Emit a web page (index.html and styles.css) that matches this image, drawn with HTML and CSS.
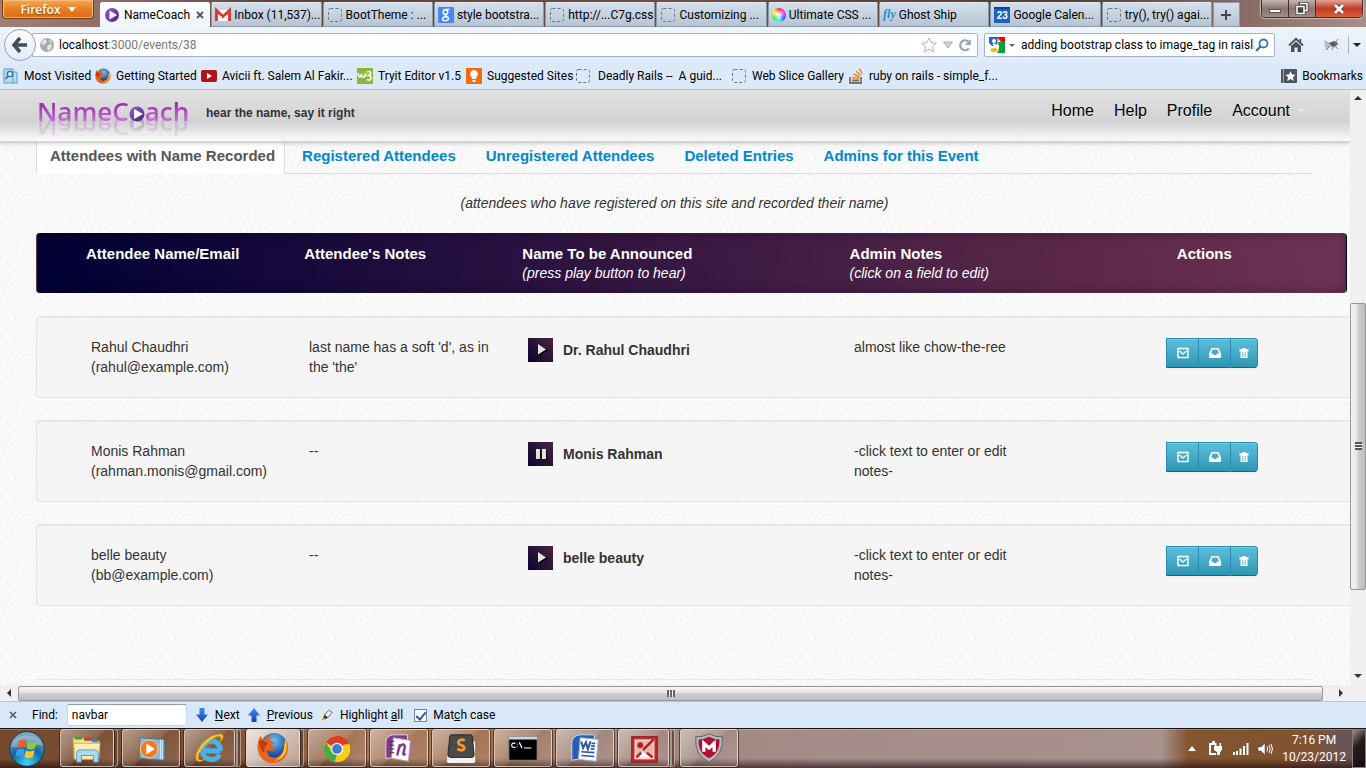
FILE: index.html
```
<!DOCTYPE html>
<html lang="en">
<head>
<meta charset="utf-8">
<title>NameCoach</title>
<link rel="stylesheet" href="styles.css">
</head>
<body>
<svg class="sprites" aria-hidden="true">
  <defs>
    <linearGradient id="gPurple" x1="0" y1="0" x2="1" y2="1"><stop offset="0" stop-color="#9a5fd0"/><stop offset="1" stop-color="#4b2078"/></linearGradient>
    <linearGradient id="gBlue" x1="0" y1="0" x2="0" y2="1"><stop offset="0" stop-color="#3f8df2"/><stop offset="1" stop-color="#1443b8"/></linearGradient>
    <radialGradient id="gOrb" cx=".5" cy=".9" r=".9"><stop offset="0" stop-color="#3fd4ff"/><stop offset=".5" stop-color="#12679f"/><stop offset="1" stop-color="#8fb3c9"/></radialGradient>
    <radialGradient id="gFox" cx=".5" cy=".3" r=".7"><stop offset="0" stop-color="#6fc4f5"/><stop offset="1" stop-color="#0c2a80"/></radialGradient>
  </defs>
  <symbol id="blank" viewBox="0 0 16 16"><rect x="1.500" y="1.500" width="13" height="13" rx="2" fill="none" stroke="#6b7480" stroke-dasharray="3 2"/></symbol>
  <symbol id="coach" viewBox="0 0 16 16"><circle cx="8" cy="8" r="7" fill="url(#gPurple)"/><path d="M5.500 3.500L13 8L5.500 12.500Z" fill="#fff"/></symbol>
  <symbol id="gmail" viewBox="0 0 16 16"><path d="M0 3h16v11H0z" fill="#fff"/><path d="M1.500 14V3.500L8 9.500L14.500 3.500V14" fill="none" stroke="#d93a32" stroke-width="3"/><path d="M3 13.500L6.500 9M13 13.500L9.500 9" stroke="#ccc" fill="none"/></symbol>
  <symbol id="goog" viewBox="0 0 16 16"><rect width="16" height="16" rx="1" fill="#4a86f0"/><path d="M11.500 2.500H7.500C4.500 2.500 4.500 7.500 7.500 7.500S10.500 3 7.500 3M7.500 7.500C6 9 10.500 9 10.500 11.500S4.500 14.500 4.500 12S8 9.800 9 9.500" fill="none" stroke="#fff" stroke-width="1.500"/></symbol>
  <symbol id="world" viewBox="0 0 16 16"><circle cx="8" cy="8" r="7" fill="#a9a9a9"/><path d="M3 4L7 2L8 5L5 8L2 7ZM9 8L13 7L12 12L9 14L8 11ZM10 2L13 5L11 6Z" fill="#e3e3e3"/></symbol>
  <symbol id="fox" viewBox="0 0 34 34"><circle cx="18" cy="15" r="14" fill="url(#gFox)"/><path d="M2 8C1 10 0 15 1 20C3 30 12 34 18 33C27 32 33 26 33 16C33 13 32 10 30 8C30 11 30 13 29 14C30 20 25 27 18 27C13 27 10 23 11 19C14 21 17 20 20 18C18 17 15 17 15 14L19 12C18 10 14 10 12 8C13 6 15 5 15 4C12 4 9 6 8 8C6 8 4 6 4 4C3 5 2 7 2 8Z" fill="#e8641b"/><path d="M30 8C34 16 31 29 18 31C27 26 29 20 29 14Z" fill="#fdc52f"/><path d="M2 10C4 8 6 9 8 10L12 12C9 14 7 17 8 22C5 20 3 17 2 10Z" fill="#c2380f"/></symbol>
  <symbol id="envelope" viewBox="0 0 12 12"><path d="M1 1.500h10v9H1z" fill="none" stroke="#fff" stroke-width="1.400"/><path d="M2.500 4L6 7L9.500 4" fill="none" stroke="#fff" stroke-width="1.400"/></symbol>
  <symbol id="inbox" viewBox="0 0 12 12"><path d="M2.500 1H9.500L12 6.500V11H0V6.500ZM3.500 2.500L2 6.500H4L4.800 8H7.200L8 6.500H10L8.500 2.500Z" fill="#fff" fill-rule="evenodd"/></symbol>
  <symbol id="trash" viewBox="0 0 12 12"><path d="M4.500 1h3v1h3v2.500H1.500V2h3ZM2.500 4.500H9.500V11H2.500Z" fill="#fff"/><path d="M4.500 5v5M6 5v5M7.500 5v5" stroke="#5fb4cd" stroke-width=".6"/></symbol>
</svg>

<div class="window">
  <header class="titlebar">
    <button class="fx-menu" type="button">Firefox <span class="tri-w"></span></button>
    <nav class="tabs" aria-label="Open tabs">
      <button class="tab active" type="button"><svg><use href="#coach"/></svg><span>NameCoach</span><svg class="x" viewBox="0 0 8 8"><path d="M1 1L7 7M7 1L1 7" stroke="#555" stroke-width="1.800"/></svg></button>
      <button class="tab" type="button"><svg><use href="#gmail"/></svg><span>Inbox (11,537)...</span></button>
      <button class="tab" type="button"><svg><use href="#blank"/></svg><span>BootTheme : ...</span></button>
      <button class="tab" type="button"><svg><use href="#goog"/></svg><span>style bootstra...</span></button>
      <button class="tab" type="button"><svg><use href="#blank"/></svg><span>http://...C7g.css</span></button>
      <button class="tab" type="button"><svg><use href="#blank"/></svg><span>Customizing ...</span></button>
      <button class="tab" type="button"><i class="wheel"></i><span>Ultimate CSS ...</span></button>
      <button class="tab" type="button"><em class="fly">fly</em><span>Ghost Ship</span></button>
      <button class="tab" type="button"><b class="cal">23</b><span>Google Calen...</span></button>
      <button class="tab" type="button"><svg><use href="#blank"/></svg><span>try(), try() agai...</span></button>
      <button class="newtab" type="button" aria-label="New tab"><svg viewBox="0 0 12 12"><path d="M6 1v10M1 6h10" stroke="#445" stroke-width="2"/></svg></button>
    </nav>
    <div class="winctl">
      <button type="button" aria-label="Minimize"><svg viewBox="0 0 16 14"><rect x="2.500" y="7.500" width="11" height="3" fill="#fff" stroke="#555"/></svg></button>
      <button type="button" aria-label="Restore"><svg viewBox="0 0 16 14"><path d="M6 1.500h7v7h-7zM3 4.500h7v7H3z" fill="#877" stroke="#444" stroke-width="3"/><path d="M6 1.500h7v7h-3M3 4.500h7v7H3z" fill="none" stroke="#fff" stroke-width="1.500"/></svg></button>
      <button class="close" type="button" aria-label="Close"><svg viewBox="0 0 16 14"><path d="M4 3L12 11M12 3L4 11" stroke="#633" stroke-width="4.500"/><path d="M4 3L12 11M12 3L4 11" stroke="#fff" stroke-width="2.800"/></svg></button>
    </div>
  </header>

  <div class="navbar">
    <button class="back" type="button" aria-label="Back"><svg viewBox="0 0 18 18"><path d="M9 2L3 9L9 16M3 9H16" fill="none" stroke="#42505c" stroke-width="3.600"/></svg></button>
    <div class="address">
      <svg class="i16"><use href="#world"/></svg>
      <div class="url">localhost<span>:3000/events/38</span></div>
      <svg class="i16" viewBox="0 0 16 16"><path d="M8 1L10.200 5.700L15.300 6.200L11.500 9.700L12.600 14.800L8 12.200L3.400 14.800L4.500 9.700L.7 6.200L5.800 5.700Z" fill="#fff" stroke="#a9b2bc"/></svg>
      <svg class="i9" viewBox="0 0 10 8"><path d="M.5 1h9L5 7Z" fill="#cdd5e2" stroke="#a3adbd"/></svg>
      <svg class="i14" viewBox="0 0 14 14"><path d="M11 10.500A5 5 0 1 1 10.500 3.500" fill="none" stroke="#98a3b0" stroke-width="2.200"/><path d="M12.800 1v6H7Z" fill="#98a3b0"/></svg>
    </div>
    <div class="search">
      <svg class="i16" viewBox="0 0 16 16"><path d="M8 0h8v5h-4Z" fill="#f00"/><path d="M9 5h7v11H8l2-5Z" fill="#0f9f3a"/><path d="M0 0h9l-1 9H3L0 6Z" fill="#2a62d8"/><circle cx="5" cy="4" r="2" fill="#fff"/><ellipse cx="5" cy="13" rx="4" ry="2.500" fill="#f3b020" stroke="#fff"/><path d="M4 7l6 3" stroke="#fff" stroke-width="2"/></svg>
      <span class="tri-d"></span>
      <input type="text" aria-label="Search" value="adding bootstrap class to image_tag in raisl">
      <svg class="i14" viewBox="0 0 14 14"><circle cx="8.500" cy="5.500" r="4" fill="none" stroke="#3a74b8" stroke-width="1.800"/><path d="M5.500 8.500L1.200 12.800" stroke="#3a74b8" stroke-width="2.400"/></svg>
    </div>
    <svg class="home" viewBox="0 0 16 16"><path d="M1 8.500L8 1.800L15 8.500" fill="none" stroke="#46525e" stroke-width="1.800"/><path d="M3 9L8 4.500L13 9V15H9.500V10.500H6.500V15H3ZM11.500 2H13.200V6L11.500 4.500Z" fill="#46525e"/></svg>
    <svg class="bug" viewBox="0 0 18 14"><path d="M1 6L8 4L10 8L3 11ZM9 3L16 5L12 10L8 8Z" fill="#b9bfc6"/><path d="M6 5L12 3L15 6L10 9Z" fill="#555"/><path d="M3 12L7 8M9 12L10 8M15 11L12 8M15 1L12 5M1 3L6 6" fill="none" stroke="#888"/><circle cx="12.500" cy="5" r="1" fill="#a66"/></svg>
    <span class="sep"></span>
    <span class="tri-k"></span>
  </div>

  <nav class="bookmarks" aria-label="Bookmarks">
    <a href="#" class="b1"><svg viewBox="0 0 16 16"><path d="M1 1h9v14H1zM10 4h4v11h-4" fill="#b9dcf0" stroke="#5b9cc4"/><circle cx="7" cy="6" r="2.600" fill="#dff1fb" stroke="#30709c" stroke-width="1.400"/><path d="M5 8L2.500 11" stroke="#30709c" stroke-width="1.600"/></svg>Most Visited</a>
    <a href="#" class="b2"><svg><use href="#fox"/></svg>Getting Started</a>
    <a href="#" class="b3"><svg viewBox="0 0 16 16"><rect y="2" width="16" height="12" rx="2" fill="#b31217"/><path d="M6 5L11 8L6 11Z" fill="#fff"/></svg>Avicii ft. Salem Al Fakir...</a>
    <a href="#" class="b4"><svg viewBox="0 0 16 16"><rect width="16" height="16" fill="#8cb63c"/><path d="M1 5C2 11 4 9 4.500 6C5 11 8 10 8.500 5M10 4C14 2 15 6 11.500 7.500C16 8 14 14 10 11.500" fill="none" stroke="#fff" stroke-width="1.600"/></svg>Tryit Editor v1.5</a>
    <a href="#" class="b5"><svg viewBox="0 0 16 16"><rect width="16" height="16" fill="#f36a10"/><path d="M8 2a4 4 0 0 1 2.500 7L10 11H6L5.500 9A4 4 0 0 1 8 2M6.500 12h3v2h-3z" fill="#fff"/></svg>Suggested Sites</a>
    <a href="#" class="b6"><svg><use href="#blank"/></svg>Deadly Rails --&nbsp; A guid...</a>
    <a href="#" class="b7"><svg><use href="#blank"/></svg>Web Slice Gallery</a>
    <a href="#" class="b8"><svg viewBox="0 0 16 16"><path d="M2 9v6h11V9M4 12.500h7" fill="none" stroke="#77736f" stroke-width="1.800"/><path d="M4 9.500L11 10.500M5.500 6L11.500 9M8 3L12.500 7.500M11.500 .5L14 6" stroke="#ec8a25" stroke-width="1.600"/></svg>ruby on rails - simple_f...</a>
    <a href="#" class="b9"><svg viewBox="0 0 16 16"><rect y="1" width="16" height="14" rx="1" fill="#4a5560"/><path d="M2.500 1v14" stroke="#9aa"/><path d="M9.500 3L11 6.500L14.500 6.800L12 9.200L12.800 13L9.500 11L6.200 13L7 9.200L4.500 6.800L8 6.500Z" fill="#fff"/></svg>Bookmarks</a>
  </nav>

  <div class="viewport">
    <main class="page">
      <header class="site">
        <a class="logo" href="#" aria-label="NameCoach">NameC<svg viewBox="0 0 16 16"><circle cx="8" cy="8" r="7.500" fill="url(#gPurple)"/><path d="M5 3L14 8L5 13Z" fill="#fff"/></svg>ach</a>
        <strong class="tagline">hear the name, say it right</strong>
        <nav class="menu" aria-label="Site">
          <a href="#">Home</a><a href="#">Help</a><a href="#">Profile</a><a href="#">Account<span class="caret"></span></a>
        </nav>
      </header>

      <section class="content">
        <nav class="pills" aria-label="Attendee lists">
          <a class="on" href="#">Attendees with Name Recorded</a>
          <a href="#">Registered Attendees</a>
          <a href="#">Unregistered Attendees</a>
          <a href="#">Deleted Entries</a>
          <a href="#">Admins for this Event</a>
        </nav>
        <p class="hint">(attendees who have registered on this site and recorded their name)</p>
        <table class="people">
          <thead>
            <tr>
              <th>Attendee Name/Email</th>
              <th>Attendee's Notes</th>
              <th>Name To be Announced<em>(press play button to hear)</em></th>
              <th>Admin Notes<em>(click on a field to edit)</em></th>
              <th>Actions</th>
            </tr>
          </thead>
          <tbody>
            <tr>
              <td>Rahul Chaudhri<br>(rahul@example.com)</td>
              <td class="note">last name has a soft 'd', as in the 'the'</td>
              <td class="name"><button class="play" type="button" aria-label="Play"><svg viewBox="0 0 25 24"><path d="M11 7L20 12.500L11 18Z" fill="#000"/><path d="M10 6L18 11.500L10 16.500Z" fill="#e4e0e4"/></svg></button><strong>Dr. Rahul Chaudhri</strong></td>
              <td class="note admin">almost like chow-the-ree</td>
              <td class="btns"><button type="button" aria-label="Email"><svg><use href="#envelope"/></svg></button><button type="button" aria-label="Archive"><svg><use href="#inbox"/></svg></button><button type="button" aria-label="Delete"><svg><use href="#trash"/></svg></button></td>
            </tr>
            <tr>
              <td>Monis Rahman<br>(rahman.monis@gmail.com)</td>
              <td class="note">--</td>
              <td class="name"><button class="play" type="button" aria-label="Pause"><svg viewBox="0 0 25 24"><path d="M9 8h4v10H9zM15 8h4v10h-4z" fill="#000"/><path d="M8 7h4v10H8zM14 7h4v10h-4z" fill="#e4e0e4"/></svg></button><strong>Monis Rahman</strong></td>
              <td class="note admin">-click text to enter or edit notes-</td>
              <td class="btns"><button type="button" aria-label="Email"><svg><use href="#envelope"/></svg></button><button type="button" aria-label="Archive"><svg><use href="#inbox"/></svg></button><button type="button" aria-label="Delete"><svg><use href="#trash"/></svg></button></td>
            </tr>
            <tr>
              <td>belle beauty<br>(bb@example.com)</td>
              <td class="note">--</td>
              <td class="name"><button class="play" type="button" aria-label="Play"><svg viewBox="0 0 25 24"><path d="M11 7L20 12.500L11 18Z" fill="#000"/><path d="M10 6L18 11.500L10 16.500Z" fill="#e4e0e4"/></svg></button><strong>belle beauty</strong></td>
              <td class="note admin">-click text to enter or edit notes-</td>
              <td class="btns"><button type="button" aria-label="Email"><svg><use href="#envelope"/></svg></button><button type="button" aria-label="Archive"><svg><use href="#inbox"/></svg></button><button type="button" aria-label="Delete"><svg><use href="#trash"/></svg></button></td>
            </tr>
          </tbody>
        </table>
      </section>
      <div class="rule"></div>
    </main>
    <div class="vscroll"><span class="arr up"></span><div class="vtrack"><div class="vthumb"><span class="grip"></span></div></div><span class="arr down"></span></div>
    <div class="hscroll"><span class="arr left"></span><div class="hthumb"><span class="grip side"></span></div><span class="arr right"></span></div>
    <div class="corner"></div>
  </div>

  <form class="find">
    <button class="fclose" type="button" aria-label="Close find bar"><svg viewBox="0 0 8 8"><path d="M1 1L7 7M7 1L1 7" stroke="#555" stroke-width="1.500"/></svg></button>
    <label for="q">Find:</label>
    <input id="q" type="text" value="navbar">
    <button type="button"><svg viewBox="0 0 12 14"><path d="M3.500 0h5v6.500H12L6 14L0 6.500h3.500Z" fill="url(#gBlue)"/></svg><span><u>N</u>ext</span></button>
    <button type="button"><svg viewBox="0 0 12 14"><path d="M3.500 14h5V7.500H12L6 0L0 7.500h3.500Z" fill="url(#gBlue)"/></svg><span><u>P</u>revious</span></button>
    <button type="button"><svg viewBox="0 0 14 14"><path d="M4 7L9 1.500L13 4L8 10Z" fill="#f3f3f3" stroke="#555"/><path d="M4 7L8 10L5 12L2.500 10Z" fill="#333"/><path d="M0 14L2.500 10L5 12Z" fill="#f5a300"/></svg><span>Highlight <u>a</u>ll</span></button>
    <label class="check"><input type="checkbox" checked><span>Mat<u>c</u>h case</span></label>
  </form>

  <footer class="taskbar">
    <button class="orb" type="button" aria-label="Start"><svg viewBox="0 0 36 36"><circle cx="18" cy="18" r="17.300" fill="url(#gOrb)" stroke="#123a57"/><path d="M2 15C6 1 30 1 34 15C26 11 10 20 2 15Z" fill="#fff" opacity=".28"/><path d="M10 10C13 8 15 9 17.500 10L16 17C13 15.500 11 15.500 8.500 17Z" fill="#ef5a26"/><path d="M19 10.500C22 12 25 12 28 10.500L26 17.500C23 19 20 19 17.500 17.500Z" fill="#8fc63f"/><path d="M8 18.500C10.500 17 13 17 15.500 18.500L14 25.500C11.500 24 9 24 6.500 25.500Z" fill="#3c9fe8"/><path d="M17 19.500C20 21 23 20.500 25.500 19L24 26C21 27.500 18 27.500 15.500 26Z" fill="#fdc82f"/></svg></button>
    <nav class="apps" aria-label="Taskbar">
      <button class="stack" type="button" aria-label="Explorer"><svg viewBox="0 0 34 34"><path d="M2 6h11l2 3h15v19H3Z" fill="#f4e08a" stroke="#b59b3d"/><path d="M4 5h8v3H4z" fill="#3a3"/><path d="M14 6h7v3h-7z" fill="#d33"/><path d="M22 8h7v3h-7z" fill="#38d"/><path d="M3 12h28l-2 17H4Z" fill="#fbeeb0" stroke="#cdb45a"/><path d="M6 32V22Q6 19 10 19H25Q29 19 29 22V32H24V25H11V32Z" fill="#a9d9ef" stroke="#5b9bbd"/></svg></button>
      <button type="button" aria-label="Media Player"><svg viewBox="0 0 34 34"><path d="M5 6L31 8V30L5 28Z" fill="#7fb9dd" stroke="#41799f"/><path d="M27 8v21M29 8v21" stroke="#d9f0ff"/><circle cx="15" cy="18" r="9.500" fill="#f07a1c" stroke="#ffd1a0"/><path d="M12 12L21 18L12 24Z" fill="#fff"/></svg></button>
      <button class="stack two" type="button" aria-label="Internet Explorer"><svg viewBox="0 0 34 34"><path d="M28 20H10M28 20C28 6 9 6 9 19C9 31 24 32 27 24" fill="none" stroke="#46b4ea" stroke-width="5.500"/><path d="M4 31C-3 27 10 6 23 3C34 0 32 7 27 11C32 2 24 4 20 7C10 13 2 26 5 29C7 31 11 29 13 28C9 31 6 32 4 31Z" fill="#fbc92c" stroke="#c98f12" stroke-width=".5"/></svg></button>
      <button class="stack current" type="button" aria-label="Firefox"><svg><use href="#fox"/></svg></button>
      <button type="button" aria-label="Chrome"><svg viewBox="0 0 34 34"><circle cx="17" cy="18" r="14" fill="#fbd116"/><path d="M17 18L5 11A14 14 0 0 1 29 11Z" fill="#dd3b2e"/><path d="M17 4A14 14 0 0 1 30 13H17Z" fill="#dd3b2e"/><path d="M5 11L12 22L17 24L14.500 32A14 14 0 0 1 5 11Z" fill="#4aa84b"/><circle cx="17" cy="18" r="6.500" fill="#fff"/><circle cx="17" cy="18" r="5.200" fill="#3f7fc8"/></svg></button>
      <button type="button" aria-label="OneNote"><svg viewBox="0 0 34 34"><path d="M3 11Q3 4 11 3H26V26L3 28Z" fill="#7a3f86" stroke="#e7d6ea"/><path d="M11 6L29 9L27 31L9 28Z" fill="#fff" stroke="#b79cc0"/><path d="M29 12h3v4h-3zM29 18h3v4h-3z" fill="#a876b5"/><path d="M15 25L18 13M16.500 18C19 12 24 12 23 17L21.500 23Q22 25 24 23" fill="none" stroke="#803a8e" stroke-width="2.600"/><path d="M7 10h5M7 14h5M7 18h5M7 22h5" stroke="#333"/></svg></button>
      <button type="button" aria-label="Sublime Text"><svg viewBox="0 0 34 34"><path d="M4 10L32 10V31Q32 33 30 33H4Q2 33 2 31Z" fill="#f2f2f2"/><path d="M7 3H27Q29 3 29 5L31 24Q31 27 28 27H6Q3 27 3 24L5 5Q5 3 7 3Z" fill="#4a4a4a" stroke="#222"/><path d="M21 9C14 6 12 13 17 14C23 15 21 22 13 18" fill="none" stroke="#f59535" stroke-width="3"/></svg></button>
      <button type="button" aria-label="Command Prompt"><svg viewBox="0 0 34 34"><rect x="2" y="5" width="30" height="25" fill="#000" stroke="#888"/><rect x="2" y="5" width="30" height="3" fill="#c5d5e5"/><path d="M9 12Q5 11 5 14Q5 17 9 16M11 12.500v.8M11 15.500v.8M13 11L16 17M18 17H26" fill="none" stroke="#fff" stroke-width="1.300"/></svg></button>
      <button type="button" aria-label="Word"><svg viewBox="0 0 34 34"><path d="M3 12Q3 4 12 3H27V26L3 30Z" fill="#2a5db0" stroke="#cfe0f5"/><path d="M12 6L31 8L29 31L10 29Z" fill="#fff" stroke="#9ab4d8"/><path d="M13 10L15 17L18 11L20 18L23 10" fill="none" stroke="#2a56a8" stroke-width="2.200"/><path d="M24 12h4M23.500 15h4M23 18h4M13 21l14 1M13 25l14 1" stroke="#2a56a8" stroke-width="1.800"/></svg></button>
      <button class="stack two" type="button" aria-label="Picture Manager"><svg viewBox="0 0 34 34"><rect x="4" y="5" width="27" height="27" fill="#c52a2a" stroke="#7e1414"/><rect x="7.500" y="8.500" width="20" height="20" fill="#e8b4ac" stroke="#fff"/><circle cx="13" cy="14" r="3" fill="#b51e1e"/><path d="M9 27L15 21L26 27Z" fill="#fff"/><path d="M16 19L27 8M9 27L14 22M20 22L26 27" fill="none" stroke="#b51e1e" stroke-width="2.600"/></svg></button>
      <button type="button" aria-label="McAfee"><svg viewBox="0 0 34 34"><path d="M17 2Q25 6 31 5Q33 24 17 32Q1 24 3 5Q9 6 17 2Z" fill="#b5b9bd" stroke="#5c5f62"/><path d="M17 5Q23 8 28 8Q29 22 17 28Q5 22 6 8Q11 8 17 5Z" fill="#b01030"/><path d="M11.500 21V12L17 17L22.500 12V21" fill="none" stroke="#fff" stroke-width="3.500"/></svg></button>
    </nav>
    <div class="tray">
      <svg viewBox="0 0 10 6" class="t1"><path d="M0 6L5 0L10 6Z" fill="#fff"/></svg>
      <svg viewBox="0 0 16 16" class="t2"><path d="M7 3H2v10h6M4 1h3" fill="none" stroke="#fff" stroke-width="2"/><path d="M6 5h8v4l-2 2v3H9v-3L6 9ZM7 2h1.500v3H7zM11.500 2H13v3h-1.500z" fill="#fff"/></svg>
      <svg viewBox="0 0 16 12" class="t3"><path d="M0 9h2v3H0zM3 8h2v4H3zM6.500 5.500h2V12h-2zM10 3h2v9h-2zM13.500 0h2v12h-2z" fill="#fff"/></svg>
      <svg viewBox="0 0 16 14" class="t4"><path d="M1 5h3L8 1v12L4 9H1Z" fill="#fff" stroke="#444" stroke-width=".5"/><path d="M10 4.500Q11.500 7 10 9.500M12 3Q14.500 7 12 11M14 2Q17 7 14 12" fill="none" stroke="#fff"/></svg>
      <div class="clock">7:16 PM<br>10/23/2012</div>
      <button class="peek" type="button" aria-label="Show desktop"></button>
    </div>
  </footer>
</div>
</body>
</html>
```
FILE: styles.css
```
* { box-sizing: border-box; }
body { margin: 0; font-family: Roboto, "Open Sans", sans-serif; font-size: 12px; color: #000; }
button { font: inherit; color: inherit; padding: 0; border: 0; background: none; }
input { font: inherit; }
a { text-decoration: none; color: inherit; }
svg { display: block; flex: none; overflow: visible; }
.sprites { position: absolute; width: 0; height: 0; }
.window { display: flex; flex-direction: column; height: 100vh; overflow: hidden; background: #dbe9f8; }

.titlebar { display: flex; height: 27px; flex: none; padding-left: 2px; background: linear-gradient(90deg, #a08078, #8d6f66 8%, #5d423c 20%, #6f4f47 50%, #543c38 78%, #8d6f69 92%, #a88f8b); }
.fx-menu { width: 92px; height: 19px; margin-right: 6px; border: 1px solid #7c3a0c; border-top: 0; border-radius: 0 0 4px 4px; background: linear-gradient(#f6a951, #e6781c 60%, #dd6b12); color: #fff; font-family: "Open Sans", sans-serif; font-weight: 600; display: flex; align-items: center; justify-content: center; gap: 7px; box-shadow: inset 0 0 0 1px #f9bd7a; text-shadow: 0 1px 1px #8a4a10; }
.tri-w { border: 4px solid transparent; border-top: 5px solid #fff; border-bottom: 0; }
.tabs { display: flex; gap: 1px; padding-top: 2px; flex: 1; margin-right: 21px; }
.tab { flex: 1 1 0; min-width: 0; height: 25px; display: flex; align-items: center; gap: 3px; padding: 0 0 0 3px; overflow: hidden; background: linear-gradient(#d3dfeb, #b7c4d3); border: 1px solid #8f9aa8; border-top-color: #e2eaf2; border-radius: 2px 2px 0 0; white-space: nowrap; }
.tab svg { width: 16px; height: 16px; }
.tab.active { background: linear-gradient(#fff, #edf4fc); border-color: #f4f8fd; gap: 4px; }
.tab .x { width: 8px; height: 8px; margin-left: 2px; }
.wheel { width: 14px; height: 14px; border-radius: 50%; flex: none; background: radial-gradient(#fff, transparent 60%), conic-gradient(#f33, #f3f, #44f, #3ff, #3e3, #ff3, #f33); }
.fly { font: italic bold 12px "Liberation Serif", serif; color: #1d8fcb; }
.cal { width: 16px; height: 16px; background: #1b62c8; color: #fff; font: bold 10px/14px "Liberation Sans", sans-serif; text-align: center; border-top: 2px solid #0d479d; }
.newtab { width: 27px; height: 25px; background: linear-gradient(#d3dfeb, #b7c4d3); border: 1px solid #8f9aa8; display: grid; place-items: center; }
.newtab svg { width: 12px; height: 12px; }
.winctl { display: flex; margin-right: 3px; height: 18px; border: 1px solid #403030; border-top: 0; border-radius: 0 0 5px 5px; overflow: hidden; box-shadow: 0 0 1px 1px #c9b8b4; }
.winctl button { width: 27px; display: grid; place-items: center; border-right: 1px solid #403030; background: linear-gradient(#c6b5b1, #8a7570 50%, #a08d88); }
.winctl .close { width: 46px; border: 0; background: linear-gradient(#e0a595, #c23a20 50%, #d8603e); }
.winctl svg { width: 16px; height: 14px; }

.navbar { height: 36px; flex: none; display: flex; align-items: center; padding: 0 5px 0 4px; background: linear-gradient(#edf4fc, #dfebf9); }
.back { width: 32px; height: 32px; border-radius: 50%; border: 1px solid #93a3bb; background: linear-gradient(#fdfeff, #e3ecf7); display: grid; place-items: center; z-index: 1; flex: none; }
.back svg { width: 18px; height: 18px; }
.address { flex: 1; height: 24px; margin-left: -4px; padding: 0 5px 0 6px; display: flex; align-items: center; gap: 4px; background: #fff; border: 1px solid #a5b5cb; border-radius: 0 2px 2px 0; }
.url { flex: 1; }
.url span { color: #777; }
.i16 { width: 16px; height: 16px; }
.i14 { width: 14px; height: 14px; margin-left: 1px; }
.i9 { width: 10px; height: 8px; margin-left: 2px; }
.search { width: 291px; height: 24px; margin-left: 6px; padding: 0 5px 0 4px; display: flex; align-items: center; background: #fff; border: 1px solid #a5b5cb; border-radius: 2px; }
.search input { flex: 1; min-width: 0; border: 0; padding: 0; margin-left: 6px; }
.tri-d { margin-left: 4px; border: 3px solid transparent; border-top-color: #666; border-bottom: 0; }
.home { width: 16px; height: 16px; margin-left: 13px; }
.bug { width: 18px; height: 14px; margin-left: 19px; }
.sep { width: 1px; height: 18px; background: #a9b6c8; margin-left: 7px; }
.tri-k { border: 4px solid transparent; border-top-color: #222; border-bottom: 0; margin-left: 4px; }

.bookmarks { height: 27px; flex: none; display: flex; align-items: center; padding: 0 3px; background: #dbe9f8; border-bottom: 1px solid #b3c3d8; white-space: nowrap; overflow: hidden; }
.bookmarks a { display: flex; align-items: center; gap: 5px; flex: none; }
.bookmarks svg { width: 16px; height: 16px; }
.b1 { width: 92px; } .b2 { width: 106px; } .b3 { width: 156px; } .b4 { width: 109px; } .b5 { width: 109px; } .b6 { width: 156px; } .b7 { width: 117px; } .b9 { margin-left: auto; }
.bookmarks .b6 { gap: 7px; }

.viewport { flex: 1; min-height: 0; display: grid; grid-template-columns: minmax(0, 1fr) 16px; grid-template-rows: minmax(0, 1fr) 16px; }
.page { grid-area: 1 / 1; overflow: hidden; display: flex; flex-direction: column; font: 14px/20px "Liberation Sans", Arial, sans-serif; color: #333; background: #fcfcfc url("data:image/svg+xml,%3Csvg xmlns='http://www.w3.org/2000/svg' width='160' height='160'%3E%3Cfilter id='n'%3E%3CfeTurbulence type='fractalNoise' baseFrequency='.35 .5' numOctaves='2' stitchTiles='stitch'/%3E%3CfeColorMatrix values='0 0 0 0 .5 0 0 0 0 .5 0 0 0 0 .5 .36 0 0 0 -.13'/%3E%3C/filter%3E%3Crect width='160' height='160' filter='url(%23n)'/%3E%3C/svg%3E"); }
.site { height: 52px; flex: none; z-index: 1; display: flex; align-items: flex-start; padding: 0 45px 0 37px; background: linear-gradient(#e2e2e2, #d2d2d2 62%, #fafafa); border-bottom: 1px solid #d4d4d4; box-shadow: 0 1px 4px rgba(0, 0, 0, .25); }
.logo { display: flex; align-items: center; width: 157px; margin-right: 12px; padding-top: 5px; font: 600 26px/32px "Open Sans", sans-serif; color: transparent; background: linear-gradient(#9320a4 30%, #c06bd0 80%); background-clip: text; -webkit-box-reflect: below -16px linear-gradient(transparent 10%, rgba(0, 0, 0, .4)); }
.logo svg { width: 16px; height: 16px; margin: 5px 0 0; }
.tagline { font-size: 12px; padding-top: 13px; }
.menu { margin-left: auto; display: flex; gap: 20px; padding-top: 11px; font-size: 16px; color: #000; text-shadow: 0 1px 0 #eee; }
.menu a { display: flex; align-items: center; }
.caret { margin-left: 7px; border: 4px solid transparent; border-top-color: #e8e8e8; border-bottom: 0; }
.content { padding: 0 3px 0 36px; }
.pills { display: flex; margin-right: 34px; height: 32px; border-bottom: 1px solid #ddd; font-weight: bold; font-size: 15px; color: #0088cc; }
.pills a { padding: 4px 13px 0 17px; }
.pills .on { height: 32px; padding: 4px 9px 0 13px; background: #fff; border: 1px solid #ddd; border-width: 0 1px; color: #555; }
.hint { margin: 19px 34px 20px 0; text-align: center; font-style: italic; }
.people, .people thead, .people tbody { display: block; }
.people thead tr { display: grid; grid-template-columns: 218fr 218fr 327fr 327fr 169fr; min-height: 60px; padding: 10px 0 0 49px; border: 1px solid transparent; border-radius: 4px; color: #fff; font-size: 15px; background: linear-gradient(80deg, #000033, #2a1240 38%, #532547 72%, #6e3253); box-shadow: inset 0 0 8px rgba(0, 0, 0, .35); }
.people th, .people td { padding: 0; text-align: left; }
.people em { display: block; font-weight: normal; font-size: 14px; line-height: 18px; }
.people tbody { display: flex; flex-direction: column; gap: 22px; margin: 23px -20px 0 0; }
.people tbody tr { display: grid; grid-template-columns: 218fr 219fr 326fr 312fr 200fr; min-height: 82px; padding: 20px 0 0 54px; background: #f5f5f5; border: 1px solid #e3e3e3; border-radius: 4px; box-shadow: inset 0 1px 1px rgba(0, 0, 0, .05); }
.people .note { padding-right: 30px; }
.people .admin { padding-right: 130px; }
.people .name, .people .btns { display: flex; align-items: flex-start; padding-top: 1px; }
.play { width: 25px; height: 24px; margin-right: 10px; background: linear-gradient(50deg, #08052c, #4a2340); }
.play svg { width: 25px; height: 24px; }
.name strong { padding-top: 2px; }
.btns button { width: 32px; height: 30px; display: grid; place-items: center; background: linear-gradient(#5bc0de, #2f96b4); border: 1px solid #2b8cab; border-right: 0; border-bottom-color: #1f6377; box-shadow: inset 0 1px 0 rgba(255, 255, 255, .2), 0 1px 2px rgba(0, 0, 0, .05); }
.btns button:last-child { width: 28px; border-right: 1px solid #2b8cab; border-radius: 0 4px 4px 0; }
.btns svg { width: 12px; height: 12px; }
.rule { margin: auto 36px 5px; height: 1px; background: #e8e8e8; }

.vscroll { grid-area: 1 / 2; display: flex; flex-direction: column; align-items: center; background: #f0f0f0; padding: 6px 0 7px; }
.vtrack { flex: 1; width: 16px; display: grid; grid-template-rows: 202fr 286fr 84fr; }
.vthumb { grid-row: 2; display: grid; place-items: center; border: 1px solid #979797; border-radius: 2px; background: linear-gradient(90deg, #f5f5f5, #e3e3e3 45%, #cfcfd1 50%, #bdbdbf); }
.hscroll { grid-area: 2 / 1; display: flex; align-items: center; background: #f0f0f0; padding: 0 7px; }
.hthumb { flex: 1; height: 15px; margin: 0 16px 0 7px; display: grid; place-items: center; border: 1px solid #979797; border-radius: 2px; background: linear-gradient(#f5f5f5, #e3e3e3 45%, #cfcfd1 50%, #bdbdbf); }
.corner { grid-area: 2 / 2; background: #f0f0f0; }
.grip { width: 7px; height: 8px; background: repeating-linear-gradient(#555 0 2px, #f5f5f5 2px 3px); }
.grip.side { width: 8px; height: 7px; background: repeating-linear-gradient(90deg, #666 0 2px, #f5f5f5 2px 3px); }
.arr { border: 4px solid transparent; }
.up { border-bottom-color: #333; border-top: 0; }
.down { border-top-color: #333; border-bottom: 0; }
.left { border-right-color: #333; border-left: 0; }
.right { border-left-color: #333; border-right: 0; }

.find { height: 27px; flex: none; display: flex; align-items: center; padding: 0 9px; background: #d9e8f8; border-top: 1px solid #b0c4dc; }
.fclose svg { width: 8px; height: 8px; }
.fclose { width: 23px; }
.find input[type="text"] { width: 120px; height: 22px; margin: 0 9px 0 9px; padding: 0 4px; border: 1px solid #c6d4e4; border-top-color: #8f9aaa; border-radius: 2px; }
.find button:not(.fclose) { display: flex; align-items: center; gap: 7px; margin-right: 8px; }
.find button:not(.fclose) svg { width: 12px; height: 14px; }
.find label { display: flex; align-items: center; }
.check { gap: 6px; margin-left: 3px; }
.check input { width: 13px; height: 13px; margin: 0; appearance: none; border: 1px solid #7c8796; background: #f4f7fb; display: grid; place-items: center; }
.check input::after { content: ""; width: 4px; height: 8px; margin-bottom: 2px; border: solid #3d5696; border-width: 0 2px 2px 0; transform: rotate(40deg); }

.taskbar { height: 40px; flex: none; display: flex; padding-left: 9px; border-top: 1px solid #1e1410; background: linear-gradient(rgba(255, 255, 255, .25) 0 1px, transparent 1px 75%, rgba(30, 10, 15, .65)), linear-gradient(90deg, #74492e, #85583a 20%, #a87757 27%, #a2714f 36%, #a18379 42%, #a58c88 60%, #a8928e 85%, #835530 87%, #805231 96%, #6b5552 98%); }
.orb { width: 36px; margin-right: 15px; }
.orb svg { width: 36px; height: 36px; }
.apps { display: flex; gap: 4px; }
.apps button { width: 58px; height: 38px; display: grid; place-items: center; border: 1px solid rgba(235, 220, 210, .75); border-radius: 3px; background: linear-gradient(135deg, rgba(255, 255, 255, .45), rgba(255, 255, 255, .12) 50%, rgba(255, 255, 255, .02) 51%, rgba(255, 255, 255, .12)); box-shadow: 0 0 0 1px rgba(40, 20, 15, .6); }
.apps svg { width: 32px; height: 32px; }
.apps .stack { width: 54px; margin-right: 4px; box-shadow: 0 0 0 1px rgba(40, 20, 15, .6), 4px 0 0 -1px rgba(60, 35, 25, .7), 4px 0 0 0 rgba(220, 200, 190, .6); }
.apps .stack.two { width: 51px; margin-right: 7px; box-shadow: 0 0 0 1px rgba(40, 20, 15, .6), 3px 0 0 0 rgba(220, 200, 190, .6), 6px 0 0 -1px rgba(60, 35, 25, .7), 6px 0 0 0 rgba(220, 200, 190, .6); }
.apps .current { background: linear-gradient(135deg, rgba(255, 255, 255, .85), rgba(255, 255, 255, .4)); }
.tray { margin-left: auto; display: flex; align-items: center; color: #fff; }
.t1 { width: 8px; height: 5px; margin-right: 12px; }
.t2 { width: 16px; height: 16px; margin-right: 9px; }
.t3 { width: 16px; height: 12px; margin-right: 8px; }
.t4 { width: 16px; height: 14px; margin-right: 9px; }
.clock { text-align: center; line-height: 17px; margin-right: 6px; }
.peek { width: 14px; height: 39px; border: 1px solid #8a7f7d; background: linear-gradient(135deg, #9a8f8d, #2a1c1e 40%, #150d10); }
```
